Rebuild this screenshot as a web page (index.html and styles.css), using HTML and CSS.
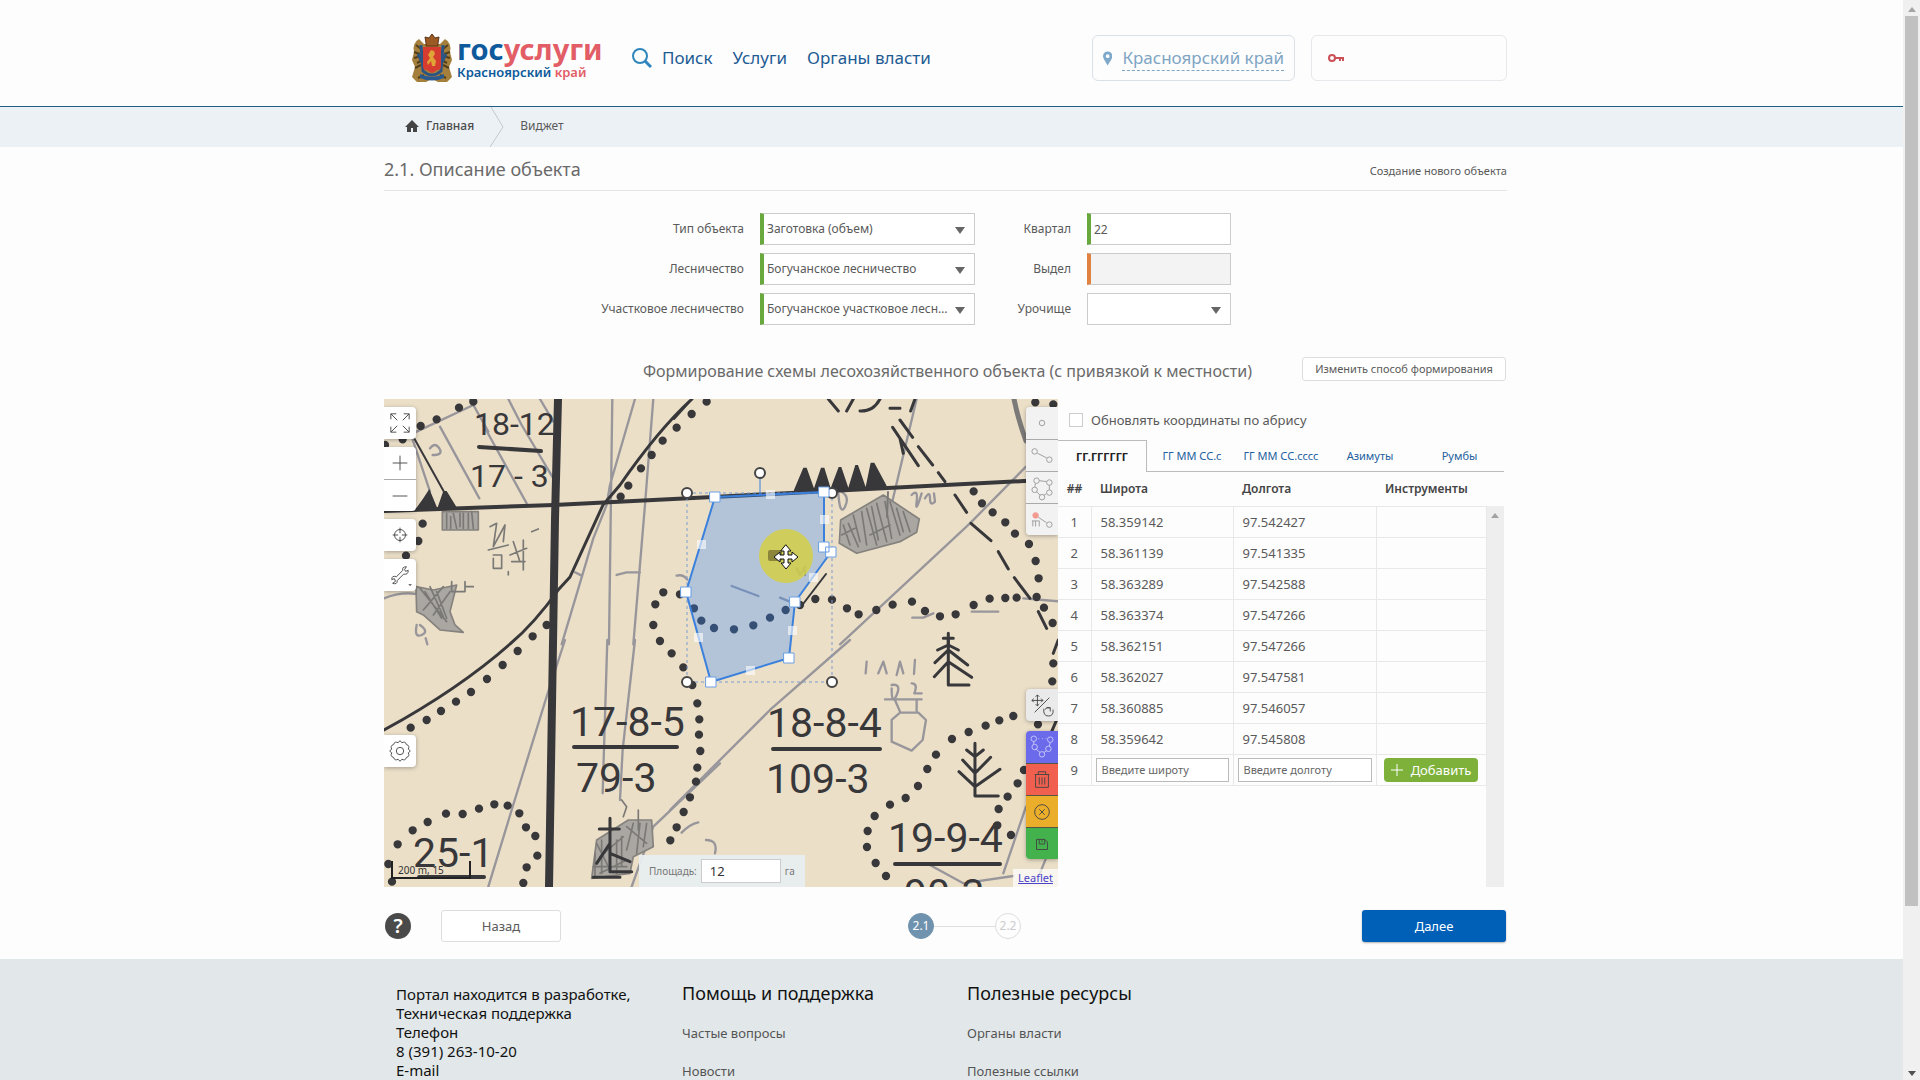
FILE: index.html
```html
<!DOCTYPE html>
<html lang="ru">
<head>
<meta charset="utf-8">
<title>Госуслуги — Красноярский край</title>
<link rel="stylesheet" href="styles.css">
</head>
<body>
<div class="page">
  <header class="header">
    <div class="wrap header-row">
      <a class="logo" href="#">
        <svg class="emblem" viewBox="0 0 40 48" width="40" height="48" aria-hidden="true">
          <path d="M7 5q-7 4-5 13l-2 8 3 7-3 10 5 5h9l6-3 6 3h9l5-5-3-10 3-7-2-8q2-9-5-13l-5 5H12z" fill="#a5803c"/>
          <path d="M4 11l5 4M2 18l6 2M2 24l7-2M3 34l6-3M36 11l-5 4M38 18l-6 2M38 24l-7-2M37 34l-6-3M6 44l6-3M34 44l-6-3M5 29l4-2M35 29l-4-2" stroke="#54401c" stroke-width="2"/>
          <path d="M9 11l2 26q9 8 18 0l2-26M6 20l4 8M34 20l-4 8" fill="none" stroke="#2d5584" stroke-width="3"/>
          <path d="M11 13h18v20q0 3-4 3l-5 3-5-3q-4 0-4-3z" fill="#d63b30"/>
          <path d="M14 9l-1-6 4 1 3-4 3 4 4-1-1 6v3H14z" fill="#9c5a25" stroke="#5d3414"/>
          <path d="M19 16l3 1 1 3-2 3 3 4-1 5h-3l-1-5-3 4-1-3 3-4-2-3z" fill="#e0a436"/>
          <path d="M8 40q12 6 24 0v4q-12 5-24 0z" fill="#29598e"/>
        </svg>
        <span class="logo-text">
          <span class="logo-name"><span class="blue">гос</span><span class="red">услуги</span></span>
          <span class="logo-region"><span class="blue">Красноярский</span> <span class="red">край</span></span>
        </span>
      </a>
      <nav class="nav">
        <a class="nav-search" href="#">
          <svg viewBox="0 0 20 20" width="20" height="20" fill="none" stroke="#2f86bd" stroke-width="2" aria-hidden="true"><circle cx="8" cy="8" r="7"/><path d="M13 13l6 6" stroke-width="3"/></svg>
          Поиск</a>
        <a href="#">Услуги</a>
        <a href="#">Органы власти</a>
      </nav>
      <div class="header-boxes">
        <button class="box region" type="button">
          <svg viewBox="0 0 10 15" width="10" height="15" aria-hidden="true"><path fill="#7fa9cb" fill-rule="evenodd" d="M5 0a5 5 0 0 1 5 5c0 3-3 6-5 10C3 11 0 8 0 5a5 5 0 0 1 5-5zm0 3a2 2 0 1 0 0 4 2 2 0 0 0 0-4z"/></svg>
          <span>Красноярский край</span>
        </button>
        <button class="box login" type="button" aria-label="Личный кабинет">
          <svg viewBox="0 0 16 9" width="16" height="9" fill="none" stroke="#cc5058" stroke-width="2" aria-hidden="true"><circle cx="4" cy="4" r="3"/><path d="M7 4h8v3M12 4v3"/></svg>
        </button>
      </div>
    </div>
  </header>

  <nav class="crumbs" aria-label="Навигация">
    <div class="wrap crumbs-row">
      <a class="home" href="#">
        <svg viewBox="0 0 14 12" width="14" height="12" fill="#444" aria-hidden="true"><path d="M7 0l7 7h-2v5H8V8H6v4H2V7H0z"/></svg>
        Главная</a>
      <svg class="chevron" viewBox="0 0 14 40" width="14" height="40" fill="none" stroke="#c3c9ce" aria-hidden="true"><path d="M1 0l12 20L0 40"/></svg>
      <span class="here">Виджет</span>
    </div>
  </nav>

  <main class="wrap main">
    <div class="title-row">
      <h1>2.1. Описание объекта</h1>
      <span class="mode">Создание нового объекта</span>
    </div>

    <form class="fields">
      <label for="type">Тип объекта</label>
      <span class="pick ok"><select id="type"><option>Заготовка (объем)</option></select></span>
      <label for="kvartal">Квартал</label>
      <input id="kvartal" class="ok" type="text" value="22">
      <label for="forest">Лесничество</label>
      <span class="pick ok"><select id="forest"><option>Богучанское лесничество</option></select></span>
      <label for="vydel">Выдел</label>
      <input id="vydel" class="wait" type="text" disabled>
      <label for="district">Участковое лесничество</label>
      <span class="pick ok"><select id="district"><option>Богучанское участковое лесничество</option></select></span>
      <label for="tract">Урочище</label>
      <span class="pick"><select id="tract"><option></option></select></span>
    </form>

    <div class="scheme-row">
      <h2>Формирование схемы лесохозяйственного объекта (с привязкой к местности)</h2>
      <button class="plain small" type="button">Изменить способ формирования</button>
    </div>

    <section class="work">
      <div class="map">
        <svg class="map-canvas" viewBox="0 0 674 488" preserveAspectRatio="xMinYMin slice" fill="none" stroke-linecap="round" stroke-linejoin="round">
          <rect width="674" height="488" fill="#ebdfc8"/>
          <!-- pencil lines -->
          <g stroke="#98969b" stroke-width="7">
            <path transform="translate(-4 -4) scale(.3333)" d="M765 12L690 270L680 330L640 430L545 748M820 12L795 330L760 748M697 12L687 748M180 95L298 310M385 12L425 90L520 250M310 90L440 325M480 12L520 80M270 12L325 110M90 110L150 290M110 110L280 30M12 610Q60 590 110 597M150 160q15-20 28 0t-20 20M710 540l30-8h40M890 542q20-5 32 12M585 532l20 10M110 690q-8 40 15 30t-5-30M137 730l5 18"/>
            <path transform="translate(-4 241) scale(.3333)" d="M555 0L500 170L395 510L325 740M682 0L668 460M765 0L728 330L720 480M1020 370L820 560L755 740M905 578Q930 552 955 547M978 600Q1015 600 1005 640"/>
            <path transform="translate(286 -4) scale(.3333)" d="M740 12L655 370M1068 215L900 385L510 748M185 573L265 603M330 608L365 622M727 668H760L790 655M905 650H985M1060 610L1200 622M725 300q20-20 15 20t15-25M765 310q15-25 15 0t15 10l-3-25M515 290q25 15 10 45t-20-40M380 520l10 20 15-25v25"/>
            <path transform="translate(286 241) scale(.3333)" d="M540 0L300 210L0 510M1068 500L1000 700M1130 650L1110 700M770 670L880 730L1030 708M590 65L587 100M625 100L640 65L650 100M680 105L690 65L700 100M735 60L732 102M645 178H755M665 135q30-5 15 30t-15-20M725 130q20 0 8 30h22M675 180L690 215M740 180L740 215M665 240L690 218H745L768 240L758 300L725 332L665 305Z"/>
          </g>
          <!-- shaded patches -->
          <g fill="#aaa7a2" stroke="#85827e" stroke-width="5">
            <path transform="translate(286 -4) scale(.3333)" d="M512 375L640 300L748 372L740 412L690 440L560 475L508 445Z"/>
            <path transform="translate(-4 -4) scale(.3333)" d="M187 350H295V405H187ZM108 575L160 585L230 570L210 650L225 690L250 712L180 705L130 660L110 650Z"/>
            <path transform="translate(-4 241) scale(.3333)" d="M650 600L745 540L815 540L820 620L760 650L750 700L635 715Z"/>
          </g>
          <g stroke="#7b7976" stroke-width="5">
            <path transform="translate(286 -4) scale(.3333)" d="M520 390l20 60M535 385l30 70M550 360l20 80M575 350l15 100M590 340l30 110M605 335l20 100M620 325l30 115M645 320l20 110M660 320l30 100M680 340l20 70M700 350l20 60M515 420l40-20M600 420l60-30"/>
            <path d="M504 93L503 118" stroke-width="2"/>
            <path transform="translate(-4 -4) scale(.3333)" d="M200 355v45M212 365v35M220 355l10 45M240 355v40M250 355v45M265 355v45M275 350l5 50M120 580l80 100M135 590l50 80M150 575l40 90M170 590l30 80M190 575l-60 70M210 590l-50 70M330 395l20-10-10 70 35-65-5 50M325 465l60-15M340 490v30h25v-40h-25M385 530v10M400 440l20 60M430 435v90M390 480l50-20M395 500h40M455 410l20-8M215 560v30h40v-30M255 575h25"/>
            <path transform="translate(-4 241) scale(.3333)" d="M645 640v70M665 600v100M650 610l40 80M660 650l70-60M660 700l80-40M710 600v100M725 590v90M740 560l60 50M760 550l-20 80M780 550l-10 90M800 550l-10 70M640 680h100M725 480l15 20-10 30M775 510v60"/>
          </g>
          <!-- boundaries -->
          <g stroke="#38373a">
            <path d="M174 0L171 120L169 244L165 488" stroke-width="8"/>
            <path d="M0 112L170 106L329 98L640 82H674" stroke-width="4"/>
            <path d="M308 0Q275 30 236 86L219 106L186 178L175 190Q150 225 126 245Q75 290 0 331" stroke-width="3"/>
            <path d="M25 30L64 100M290 20L308 0M442 175L416 209" stroke-width="2"/>
          </g>
          <path d="M630 0Q634 20 642 42" stroke="#7c7a78" stroke-width="5"/>
          <g fill="#38373a">
            <path transform="translate(286 -4) scale(.3333)" d="M372 285L400 218H410L432 280L453 218H463L482 280L506 216H514L535 278L556 210H564L587 276L602 203H613L650 272L640 280L372 290Z"/>
            <path transform="translate(-4 -4) scale(.3333)" d="M105 345L130 310L148 282L172 340L190 288H200L235 345Z"/>
          </g>
          <g stroke="#38373a" stroke-width="9">
            <path transform="translate(286 -4) scale(.3333)" d="M668 97L745 212M690 75L728 127M745 155L788 210M690 130L700 175M805 233L825 260M855 300L890 352M903 385L963 437M985 470L1015 522M1033 548L1080 610M1105 650L1130 700M475 12L505 48M550 12L530 48M570 48Q610 50 630 12M660 40H690M735 12L722 48M835 715V750M820 730h30"/>
            <path transform="translate(286 241) scale(.3333)" d="M835 0V135H897M835 15L803 30M835 15L865 30M835 30L795 68M835 30L893 75M835 65L793 110M835 65L905 112M915 310V468H985M915 350L890 330M915 350L940 330M915 400L878 360M915 400L962 352M915 440L867 395M915 440L990 388M1165 0L1150 40M1160 240L1145 275"/>
            <path transform="translate(-4 241) scale(.3333)" d="M690 535V695H755M658 567H718M690 610L650 670M690 640L750 665M640 712H720"/>
          </g>
          <!-- dotted boundaries -->
          <g stroke="#38373a" stroke-width="25">
            <path transform="translate(-4 -4) scale(.3333)" d="M980 20h0M935 57h0M890 98h0M848 137h0M815 180h0M783 220h0M745 272h0M722 305h0M280 20h0M237 38h0M170 73h0M122 93h0M15 150h0M68 133h0M128 386h0M115 438h0M78 482h0M850 592h0M826 628h0M820 690h0M840 738h0M500 690h0M458 724h0"/>
            <path transform="translate(-4 241) scale(.3333)" d="M413 33h0M368 75h0M321 117h0M273 156h0M228 185h0M183 213h0M140 240h0M92 263h0M875 40h0M910 82h0M937 135h0M952 190h0M958 238h0M957 284h0M961 333h0M952 383h0M948 425h0M930 472h0M911 516h0M890 562h0M871 601h0M383 497h0M343 493h0M297 506h0M248 522h0M198 521h0M143 546h0M98 571h0M53 613h0M25 672h0M36 725h0M418 520h0M438 562h0M466 588h0M472 647h0M440 682h0M430 729h0"/>
            <path transform="translate(286 -4) scale(.3333)" d="M30 598h0M72 640h0M94 677h0M132 699h0M192 703h0M250 691h0M300 668h0M347 645h0M390 630h0M436 612h0M486 614h0M531 640h0M566 658h0M619 645h0M668 629h0M726 620h0M765 648h0M810 664h0M857 658h0M911 630h0M959 611h0M1006 609h0M1040 608h0M1100 606h0M1122 638h0M1148 684h0M911 289h0M936 325h0M968 352h0M1006 382h0M1035 416h0M1077 447h0M1097 498h0M1106 550h0M1096 22h0M1150 28h0"/>
            <path transform="translate(286 241) scale(.3333)" d="M1150 70h0M1147 124h0M1104 253h0M1030 228h0M988 241h0M947 257h0M896 276h0M846 297h0M798 344h0M772 387h0M744 438h0M707 474h0M660 494h0M614 528h0M593 573h0M591 621h0M617 669h0M648 708h0M1043 430h0M1013 470h0M986 507h0M982 556h0M1023 585h0M1062 390h0"/>
          </g>
          <!-- block numbers -->
          <g class="map-num">
            <text class="tight" x="90" y="36">18-12</text><text class="tight" x="86" y="88">17 - 3</text>
            <text x="186" y="337">17-8-5</text><text x="192" y="393">79-3</text>
            <text x="383" y="338">18-8-4</text><text x="382" y="394">109-3</text>
            <text x="29" y="468">25-1</text>
            <text x="504" y="453">19-9-4</text><text x="520" y="509">90-3</text>
          </g>
          <g stroke="#38373a" stroke-width="4">
            <path d="M95 48L157 52M190 348H293M389 350H496M35 478H100M511 465H616"/>
          </g>
          <!-- edited plot -->
          <rect x="303" y="94" width="145" height="189" stroke="#7d9ccd" stroke-dasharray="3 3" stroke-linecap="butt"/>
          <path d="M331 98L440 93V148L447 153L411 203L405 259L327 283L302 193Z" fill="#3388ff" fill-opacity=".3" stroke="#3a80dc" stroke-width="2"/>
          <path d="M376 79V96" stroke="#3a80dc"/>
          <g fill="#fff" stroke="#444" stroke-width="2"><circle cx="376" cy="74" r="5"/><circle cx="303" cy="94" r="5"/><circle cx="448" cy="94" r="5"/><circle cx="303" cy="283" r="5"/><circle cx="448" cy="283" r="5"/></g>
          <path d="M382 91h9v9h-9zM436 116h9v9h-9zM425 174h9v9h-9zM404 227h9v9h-9zM362 267h9v9h-9zM310 234h9v9h-9zM313 141h9v9h-9z" fill="#fff" fill-opacity=".6"/>
          <path d="M326 93h10v10h-10zM435 88h10v10h-10zM435 143h10v10h-10zM442 148h10v10h-10zM406 198h10v10h-10zM400 254h10v10h-10zM322 278h10v10h-10zM297 188h10v10h-10z" fill="#fff" stroke="#6ba0e4"/>
          <circle cx="402" cy="157" r="27" fill="#d3cf45" fill-opacity=".85"/>
          <rect x="384" y="151" width="14" height="11" rx="2" fill="#8b863a"/>
          <path d="M402 146l5 6h-3v4h4v-3l6 5-6 5v-3h-4v4h3l-5 6-5-6h3v-4h-4v3l-6-5 6-5v3h4v-4h-3z" fill="#fff" stroke="#111"/>
        </svg>

        <div class="tools left top">
          <button class="tool lone" type="button" aria-label="Во весь экран"><svg viewBox="0 0 24 24"><path d="M2 8V2h6M2 2l7 7M16 2h6v6M22 2l-7 7M2 16v6h6M2 22l7-7M22 16v6h-6M22 22l-7-7"/></svg></button>
          <div class="stack">
            <button class="tool" type="button" aria-label="Приблизить"><svg viewBox="0 0 24 24"><path d="M12 4v16M4 12h16"/></svg></button>
            <button class="tool" type="button" aria-label="Отдалить"><svg viewBox="0 0 24 24"><path d="M4 12h16"/></svg></button>
          </div>
          <button class="tool lone" type="button" aria-label="Моё положение"><svg viewBox="0 0 24 24"><circle cx="12" cy="12" r="6"/><path d="M12 4v6M12 14v6M4 12h6M14 12h6"/></svg></button>
          <button class="tool lone" type="button" aria-label="Инструменты карты"><svg viewBox="0 0 24 24"><path d="M8 14l7-7q-1-4 4-4l-2 3 1 2 3-1q0 5-5 4l-7 7q0 5-5 3l3-2-1-3-3 1q0-5 5-3z"/><path d="M21 22h4l-2 2z" fill="#444" stroke="none"/></svg></button>
        </div>
        <div class="tools left gear">
          <button class="tool lone" type="button" aria-label="Настройки"><svg viewBox="0 0 24 24"><circle cx="12" cy="12" r="4"/><path d="M10 3q2-4 4 0 4-2 5 2 4 1 2 5 4 2 0 4 2 4-2 5-1 4-5 2-2 4-4 0-4 2-5-2-4-1-2-5-4-2 0-4-2-4 2-5 1-4 5-2z"/></svg></button>
        </div>
        <div class="tools right top">
          <div class="stack pale">
            <button class="tool" type="button" aria-label="Точка"><svg viewBox="0 0 24 24"><circle cx="12" cy="12" r="3"/></svg></button>
            <button class="tool" type="button" aria-label="Линия"><svg viewBox="0 0 24 24"><circle cx="4" cy="7" r="3"/><circle cx="20" cy="16" r="3"/><path d="M7 9l10 5"/></svg></button>
            <button class="tool" type="button" aria-label="Полигон"><svg viewBox="0 0 24 24"><circle cx="6" cy="4" r="3"/><circle cx="20" cy="6" r="3"/><circle cx="20" cy="17" r="3"/><circle cx="12" cy="22" r="3"/><circle cx="4" cy="14" r="3"/><path d="M9 4l8 1M20 9v5M17 18l-3 2M10 20l-4-4M4 11l1-4"/></svg></button>
            <button class="tool" type="button" aria-label="Привязка"><svg viewBox="0 0 24 24"><circle cx="5" cy="7" r="3" fill="#f49a90" stroke="#f49a90"/><circle cx="20" cy="17" r="3"/><path d="M8 9l9 6M1 13h8v6M2 13v6M5 13v6"/></svg></button>
          </div>
        </div>
        <div class="tools right bottom">
          <button class="tool lone grey" type="button" aria-label="Переместить или повернуть"><svg viewBox="0 0 24 24"><path d="M7 1v12M1 7h12M5 3l2-2 2 2M5 11l2 2 2-2M3 5L1 7l2 2M11 5l2 2-2 2M20 4L4 20M14 16q-1 8 5 8t5-7M17 15h4v4M21 15q-4-1-6 2"/></svg></button>
          <div class="stack color">
            <button class="tool violet" type="button" aria-label="Узлы"><svg viewBox="0 0 24 24"><circle cx="3" cy="3" r="3"/><circle cx="21" cy="4" r="3"/><circle cx="4" cy="12" r="3"/><circle cx="19" cy="14" r="3"/><circle cx="12" cy="20" r="3"/><path d="M3 6v3M5 14l5 4M14 18l3-2M20 11l1-4M8 3h1M12 3h1M16 3h1"/></svg></button>
            <button class="tool coral" type="button" aria-label="Удалить"><svg viewBox="0 0 24 24"><path d="M4 6h16M8 6V3h8v3M5 6v14h14V6M9 9v8M12 9v8M15 9v8"/></svg></button>
            <button class="tool amber" type="button" aria-label="Отменить"><svg viewBox="0 0 24 24"><circle cx="12" cy="12" r="8"/><path d="M9 9l6 6M15 9l-6 6"/></svg></button>
            <button class="tool green" type="button" aria-label="Сохранить"><svg viewBox="0 0 24 24"><path d="M6 7h9l3 3v8H6zM9 7v5h6V7M12 8v2"/></svg></button>
          </div>
        </div>
        <div class="scale">200 m, 15</div>
        <div class="area"><label for="area">Площадь:</label><input id="area" type="text" value="12"><span>га</span></div>
        <a class="leaflet" href="#">Leaflet</a>
      </div>

      <div class="panel">
        <label class="check"><input type="checkbox"> Обновлять координаты по абрису</label>
        <div class="tabs" role="tablist">
          <button class="active" type="button" role="tab">ГГ.ГГГГГГ</button>
          <button type="button" role="tab">ГГ ММ СС.с</button>
          <button type="button" role="tab">ГГ ММ СС.сссс</button>
          <button type="button" role="tab">Азимуты</button>
          <button type="button" role="tab">Румбы</button>
        </div>
        <table class="coords">
          <colgroup><col class="c-num"><col class="c-lat"><col class="c-lon"><col></colgroup>
          <thead><tr><th>##</th><th>Широта</th><th>Долгота</th><th>Инструменты</th><th class="gutter"></th></tr></thead>
          <tbody>
            <tr><td>1</td><td>58.359142</td><td>97.542427</td><td></td><td class="gutter" rowspan="10"><span class="arrow-up"></span></td></tr>
            <tr><td>2</td><td>58.361139</td><td>97.541335</td><td></td></tr>
            <tr><td>3</td><td>58.363289</td><td>97.542588</td><td></td></tr>
            <tr><td>4</td><td>58.363374</td><td>97.547266</td><td></td></tr>
            <tr><td>5</td><td>58.362151</td><td>97.547266</td><td></td></tr>
            <tr><td>6</td><td>58.362027</td><td>97.547581</td><td></td></tr>
            <tr><td>7</td><td>58.360885</td><td>97.546057</td><td></td></tr>
            <tr><td>8</td><td>58.359642</td><td>97.545808</td><td></td></tr>
            <tr class="entry"><td>9</td><td><input type="text" placeholder="Введите широту" aria-label="Широта"></td><td><input type="text" placeholder="Введите долготу" aria-label="Долгота"></td><td><button class="add" type="button"><svg viewBox="0 0 12 12" width="12" height="12" stroke="#fff" aria-hidden="true"><path d="M6 0v12M0 6h12"/></svg>Добавить</button></td></tr>
            <tr class="rest"><td colspan="4"></td></tr>
          </tbody>
        </table>
      </div>
    </section>

    <div class="actions">
      <button class="help" type="button">?</button>
      <button class="plain back" type="button">Назад</button>
      <div class="steps"><span class="step on">2.1</span><span class="rail"></span><span class="step">2.2</span></div>
      <button class="next" type="button">Далее</button>
    </div>
  </main>

  <footer class="footer">
    <div class="wrap footer-row">
      <p class="contact">Портал находится в разработке,<br>Техническая поддержка<br>Телефон<br>8 (391) 263-10-20<br>E-mail</p>
      <div><h3>Помощь и поддержка</h3><a href="#">Частые вопросы</a><a href="#">Новости</a></div>
      <div><h3>Полезные ресурсы</h3><a href="#">Органы власти</a><a href="#">Полезные ссылки</a></div>
    </div>
  </footer>
</div>
<div class="scrollbar" aria-hidden="true"><span class="arrow-up"></span><span class="thumb"></span><span class="arrow-down"></span></div>
</body>
</html>
```
FILE: styles.css
```css
* { box-sizing: border-box; }
body {
  margin: 0;
  display: flex;
  height: 100vh;
  overflow: hidden;
  background: #fdfdfd;
  color: #5a5a5a;
  font: 13px/20px "Noto Sans", "Open Sans", sans-serif;
}
a { color: inherit; text-decoration: none; }
h1, h2, h3, p { margin: 0; font-weight: 400; }
button, input, select { font: inherit; color: inherit; margin: 0; }
button { cursor: pointer; padding: 0; border: 0; background: none; }
.page { flex: 1; min-width: 0; display: flex; flex-direction: column; }
.wrap { width: 100%; max-width: 1135px; margin: 0 auto; padding-right: 12px; }

.scrollbar { width: 17px; padding: 4px 2px; background: #f0f0f0; display: flex; flex-direction: column; align-items: center; }
.thumb { width: 13px; height: 83%; margin-top: 4px; margin-bottom: auto; background: #c1c1c1; }
.arrow-up, .arrow-down { display: block; border: 4px solid transparent; }
.arrow-up { border-top: 0; border-bottom: 5px solid #a3a3a3; }
.scrollbar .arrow-up { margin-top: 3px; }
.arrow-down { border-bottom: 0; border-top: 5px solid #505050; }

.header { flex: none; border-bottom: 1px solid #1f6085; }
.header-row { height: 106px; display: flex; align-items: center; padding-left: 28px; padding-bottom: 10px; padding-top: 20px; }
.logo { display: flex; gap: 5px; width: 220px; }
.logo-text { display: flex; flex-direction: column; }
.logo-name { font: 700 29px/30px "Noto Sans", sans-serif; }
.logo-region { font: 600 13px/16px "Noto Sans", sans-serif; }
.blue { color: #0e5a9b; }
.red { color: #e25d66; }
.nav { display: flex; gap: 20px; font-size: 17px; line-height: 24px; color: #1d5b93; }
.nav-search { display: flex; align-items: center; gap: 10px; }
.header-boxes { margin-left: auto; display: flex; gap: 16px; }
.box { display: flex; align-items: center; height: 46px; border: 1px solid #dadfe8; border-radius: 6px; }
.region { width: 203px; padding: 0 10px; gap: 10px; font-size: 17px; color: #7fa5c4; }
.region span { border-bottom: 1px dashed #7fa5c4; line-height: 24px; white-space: nowrap; }
.login { width: 196px; padding: 0 16px; border-color: #e8e8ec; }

.crumbs { flex: none; background: #ecf1f5; }
.crumbs-row { height: 40px; display: flex; align-items: center; padding-left: 21px; font-size: 12px; overflow: hidden; }
.home, .here { padding-bottom: 3px; }
.home { display: flex; align-items: center; gap: 7px; font-weight: 500; color: #4b4b4b; }
.chevron { margin: 0 16px; flex: none; }

.main { flex: none; }
.title-row { display: flex; justify-content: space-between; align-items: center; height: 44px; border-bottom: 1px solid #e6e6e6; }
h1 { font-size: 18px; line-height: 24px; color: #6a6a6a; }
.mode { font-size: 11px; padding-top: 4px; }

.fields { display: grid; grid-template-columns: 360px 215px 80px 144px; column-gap: 16px; row-gap: 8px; align-items: center; margin-top: 22px; font-size: 12px; }
.fields label { text-align: right; }
.fields input, .fields select { display: block; width: 100%; height: 32px; border: 1px solid #ccc; border-radius: 0; background: #fff; padding: 0 3px; appearance: none; }
.fields .ok select, .fields input.ok { border-left: 4px solid #69a83c; }
.fields input.wait { border-left: 4px solid #e08340; background: #f3f3f3; }
.pick { position: relative; }
.pick select { padding-right: 24px; text-overflow: ellipsis; overflow: hidden; white-space: nowrap; }
.pick::after { content: ""; position: absolute; right: 10px; top: 14px; border: 5px solid transparent; border-top: 7px solid #666; border-bottom: 0; pointer-events: none; }

.scheme-row { display: flex; justify-content: flex-end; align-items: center; gap: 50px; height: 56px; margin-top: 18px; padding-right: 1px; }
h2 { font-size: 16px; line-height: 24px; color: #6a6a6a; }
.plain { background: #fff; border: 1px solid #ddd; border-radius: 3px; }
.small { width: 204px; height: 24px; font-size: 11px; line-height: 20px; margin-bottom: 4px; }

.work { display: grid; grid-template-columns: minmax(0, 674px) 446px; height: 488px; }
.map { position: relative; overflow: hidden; background: #ebdfc8; }
.map-canvas { display: block; width: 100%; height: 100%; }
.map-num { font: 400 41px "Roboto", sans-serif; fill: #38373a; }
.map-num .tight { font-size: 32px; }
.tools { position: absolute; display: flex; flex-direction: column; gap: 8px; }
.left { left: 0; }
.right { right: 0; }
.top { top: 8px; }
.gear { top: 336px; }
.bottom { bottom: 28px; gap: 10px; }
.tool { display: flex; align-items: center; justify-content: center; width: 32px; height: 32px; background: #fff; }
.tool svg { width: 22px; height: 22px; fill: none; stroke: #444; overflow: visible; }
.stack { display: flex; flex-direction: column; overflow: hidden; box-shadow: 0 1px 4px rgba(0, 0, 0, .3); }
.stack .tool + .tool { border-top: 1px solid #aaa; }
.lone { box-shadow: 0 1px 4px rgba(0, 0, 0, .3); }
.left .lone, .left .stack { border-radius: 0 4px 4px 0; }
.right .lone, .right .stack { border-radius: 4px 0 0 4px; }
.pale .tool { background: #f2f2f2; }
.pale svg { stroke: #999; }
.grey { background: #eaeaea; }
.color .tool + .tool { border-top-color: #554; }
.tool.violet { background: #6b6aea; }
.violet svg { stroke: #c8c8f8; }
.tool.coral { background: #f1604f; }
.tool.amber { background: #eaae2b; }
.tool.green { background: #43b14c; }
.scale { position: absolute; left: 7px; bottom: 8px; width: 80px; height: 18px; padding-left: 5px; border: 2px solid #222; border-top: 0; font-size: 10px; line-height: 18px; color: #333; }
.area { position: absolute; left: 255px; bottom: 0; display: flex; align-items: center; gap: 4px; height: 32px; padding: 0 10px; background: rgba(232, 237, 240, .95); font-size: 10px; color: #777; }
.area input { width: 80px; height: 24px; border: 1px solid #ccc; background: #fff; padding: 0 8px; font-size: 13px; color: #333; }
.leaflet { position: absolute; right: 0; bottom: 0; padding: 0 5px; background: rgba(255, 255, 255, .7); font-size: 11px; line-height: 18px; color: #4b43c9; text-decoration: underline; }

.panel { display: flex; flex-direction: column; }
.check { display: flex; align-items: center; gap: 8px; height: 41px; padding-left: 11px; }
.check input { appearance: none; width: 14px; height: 14px; border: 1px solid #ccc; background: #fff; }
.tabs { display: grid; grid-template-columns: 89px 90px 88px 90px 89px; height: 32px; font-size: 11px; color: #235f9e; }
.tabs button { border-bottom: 1px solid #bbb; white-space: nowrap; }
.tabs .active { border: 1px solid #bbb; border-left: 0; border-bottom: 0; font-weight: 700; color: #222; }
.coords { flex: 1; width: 446px; table-layout: fixed; border-collapse: collapse; }
.c-num { width: 33px; }
.c-lat { width: 142px; }
.c-lon { width: 143px; }
.coords th { height: 34px; padding: 0 9px; text-align: left; font-size: 12px; font-weight: 600; color: #444; }
.coords td { height: 31px; padding: 0 9px; border: 1px solid #e8e8e8; border-width: 1px 1px 1px 0; }
.coords tr > :first-child { text-align: center; padding: 0; }
.coords .gutter { width: 18px; padding: 0; }
.coords td.gutter { background: #eee; border: 0; vertical-align: top; }
.gutter .arrow-up { width: 8px; margin: 7px auto; }
.coords .entry td { padding: 0 4px; }
.coords .entry input { display: block; width: 100%; height: 24px; border: 1px solid #bbb; background: #fff; padding: 0 5px; font-size: 11px; }
.coords input::placeholder { color: #666; opacity: 1; }
.coords .rest td { height: auto; border-bottom: 0; border-right: 0; }
.add { display: flex; align-items: center; justify-content: center; gap: 8px; width: 94px; height: 24px; margin: 0 auto; border-radius: 4px; background: #7db13a; color: #fff; }

.actions { display: flex; align-items: center; height: 72px; padding: 6px 1px 0; }
.help { width: 26px; height: 26px; border-radius: 50%; background: #4a4a4a; color: #fff; font-size: 20px; line-height: 24px; font-weight: 600; }
.back { width: 120px; height: 32px; margin-left: 30px; }
.steps { display: flex; align-items: center; margin: 0 auto; padding-left: 6px; }
.step { width: 26px; height: 26px; border: 1px solid #ddd; border-radius: 50%; text-align: center; line-height: 24px; font-size: 12px; color: #ccc; }
.step.on { background: #6f93ae; border-color: #6f93ae; color: #fff; }
.rail { width: 61px; height: 1px; background: #ddd; }
.next { width: 144px; height: 32px; border-radius: 3px; background: #0060b8; color: #fff; box-shadow: 0 1px 2px rgba(0, 0, 0, .3); }

.footer { flex: 1 0 auto; background: #e2e8ea; color: #111; }
.footer-row { display: grid; grid-template-columns: 286px 285px 1fr; padding-left: 12px; padding-top: 24px; }
.contact { font-size: 15px; line-height: 19px; padding-top: 2px; }
h3 { font-size: 18px; line-height: 20px; margin-bottom: 21px; }
.footer-row a { display: block; line-height: 18px; margin-bottom: 20px; color: #555; }
```
